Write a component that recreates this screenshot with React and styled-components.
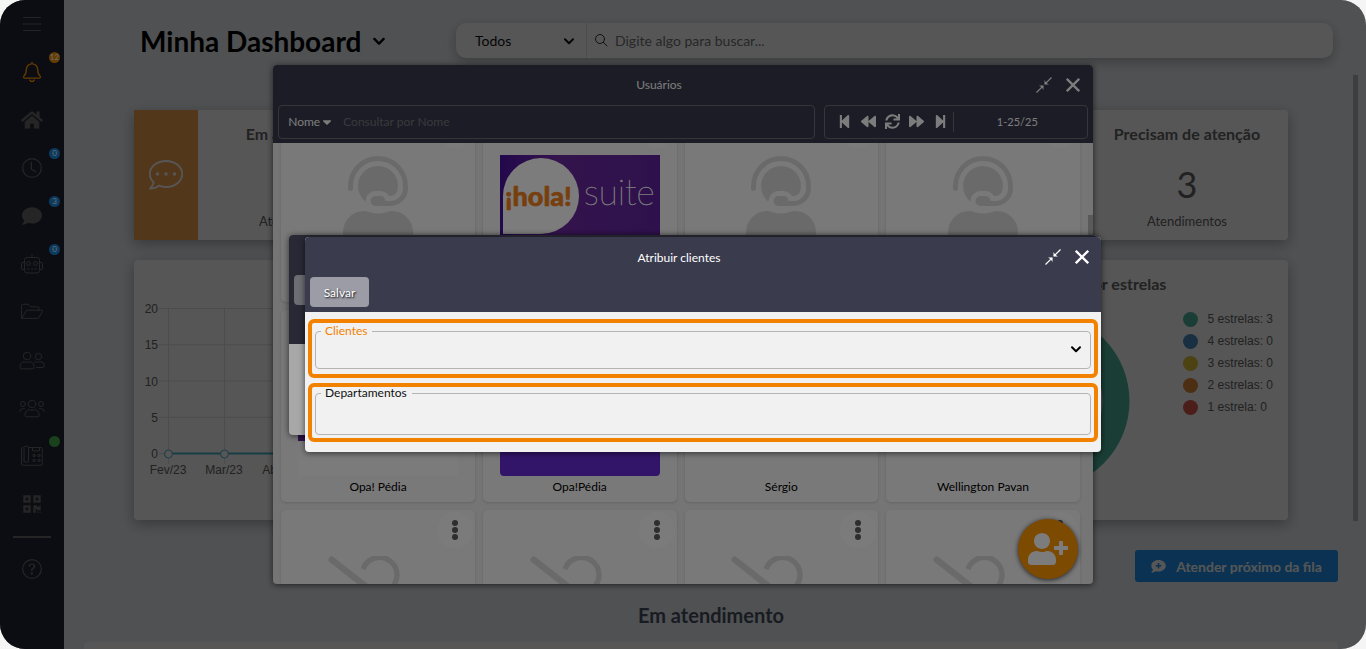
import React from 'react'
import styled, { createGlobalStyle, css } from 'styled-components'
import { FaHome, FaComment, FaQrcode, FaUserPlus, FaStepBackward, FaStepForward, FaBackward, FaForward, FaSync, FaCaretDown } from 'react-icons/fa'
import { BsClock, BsQuestionCircle } from 'react-icons/bs'

const vars = {
  FONT: 'Lato, "Open Sans", sans-serif',
  FONT_CHART: '"Liberation Sans", Arial, sans-serif',
  DARK: '#3a3b4d',
  LIGHT: '#f1f1f1',
  ORANGE: '#ff9800',
  BLUE: '#2196f3',
  SIDE_ICON: '#4c4c4c',
  SIDE_ORANGE: '#d07c00',
  SIDE_BLUE: '#1b7ac6',
  SIDE_GREEN: '#35863a',
  HIGHLIGHT: '#f28100'
}

const GlobalStyle = createGlobalStyle`
  *, *::before, *::after {
    box-sizing: border-box;
  }
  body {
    margin: 0;
    background: #f5f5f5;
    font-family: ${vars.FONT};
    font-size: 12px;
  }
  button, input, select {
    font-family: inherit;
    font-size: inherit;
    color: inherit;
    border: 0;
    margin: 0;
    padding: 0;
    background: none;
    outline: none;
  }
  select {
    appearance: none;
  }
  svg {
    display: block;
    flex: none;
  }
`

const Frame = styled.div`
  position: relative;
  display: flex;
  height: 100vh;
  overflow: hidden;
  border-radius: 25px;
  background: #ecf0f5;
`

/* sidebar */

const Sidebar = styled.nav`
  position: relative;
  z-index: 2;
  flex: none;
  display: flex;
  flex-direction: column;
  align-items: center;
  width: 64px;
  background: #1b1d27;
  color: ${vars.SIDE_ICON};
`

const SideItem = styled.button`
  position: relative;
  display: flex;
  align-items: center;
  justify-content: center;
  width: 64px;
  height: 48px;
  color: ${({ $color }) => $color || 'inherit'};
`

const Badge = styled.span`
  position: absolute;
  top: 4px;
  right: 4px;
  width: 11px;
  height: 11px;
  border-radius: 50%;
  background: ${({ $color }) => $color};
  color: #ddd;
  font-size: 8px;
  line-height: 11px;
  text-align: center;
`

const Divider = styled.hr`
  width: 38px;
  height: 2px;
  margin: 8px 0 7px;
  border: 0;
  background: ${vars.SIDE_ICON};
`

/* page */

const Main = styled.main`
  flex: 1;
  min-width: 0;
  display: flex;
  flex-direction: column;
`

const TopBar = styled.header`
  display: flex;
  align-items: center;
  height: 75px;
  padding: 6px 33px 0 76px;
`

const PageTitle = styled.h1`
  display: flex;
  align-items: center;
  gap: 11px;
  width: 316px;
  margin: 0;
  font-size: 28px;
  line-height: 36px;
  color: #000;
`

const SearchBar = styled.div`
  flex: 1;
  display: flex;
  height: 35px;
  border-radius: 10px;
  background: #fff;
  box-shadow: 0 4px 12px rgba(0, 0, 0, .25);
  font-size: 14px;
`

const Scope = styled.label`
  display: flex;
  align-items: center;
  width: 131px;
  padding: 0 11px 0 19px;
  border-right: 1px solid #e4e4e4;
  color: #111;
  select {
    flex: 1;
  }
`

const SearchBox = styled.label`
  flex: 1;
  display: flex;
  align-items: center;
  gap: 7px;
  padding: 0 7px;
  color: #333;
  input {
    flex: 1;
  }
  input::placeholder {
    color: #777;
  }
`

const Scroll = styled.div`
  position: relative;
  flex: 1;
  min-height: 0;
  overflow: hidden;
  margin-right: 8px;
  padding: 35px 20px 0;
`

const ScrollThumb = styled.div`
  position: absolute;
  top: 0;
  right: 0;
  width: 5px;
  height: ${({ $size }) => $size};
  background: #bbb;
`

const Cards = styled.section`
  display: grid;
  grid-template-columns: ${({ $columns }) => $columns};
  gap: 30px;
  padding: 0 50px 20px;
`

const Card = styled.article`
  grid-column: ${({ $column }) => $column || 'auto'};
  height: ${({ $tall }) => $tall ? '260px' : '130px'};
  display: flex;
  flex-direction: ${({ $tall }) => $tall ? 'column' : 'row'};
  border-radius: 4px;
  background: #fff;
  box-shadow: 0 4px 14px rgba(0, 0, 0, .3);
`

const CardIcon = styled.div`
  flex: none;
  display: flex;
  align-items: center;
  justify-content: center;
  width: 64px;
  background: #f8a252;
  color: #fff;
`

const CardBody = styled.div`
  flex: 1;
  display: flex;
  flex-direction: column;
  align-items: center;
  padding-top: 12px;
  color: #666;
`

const CardTitle = styled.h2`
  margin: 0;
  font-size: 16px;
  line-height: 24px;
  text-align: center;
  color: #666;
`

const CardValue = styled.div`
  margin: 16px 0 5px;
  font-size: 36px;
  line-height: 44px;
`

const CardCaption = styled.div`
  font-size: 13px;
  line-height: 20px;
`

const RatingChart = styled.div`
  display: flex;
  align-items: flex-start;
  align-self: stretch;
  justify-content: flex-end;
  gap: 53px;
  padding: 12px 15px 0 0;
`

const Legend = styled.ul`
  margin: 0;
  padding: 0;
  list-style: none;
  font: 12px/22px ${vars.FONT_CHART};
  color: #666;
`

const LegendItem = styled.li`
  display: flex;
  align-items: center;
  gap: 10px;
  &::before {
    content: '';
    width: 15px;
    height: 15px;
    border-radius: 50%;
    background: ${({ $color }) => $color};
  }
`

const ChartText = styled.g`
  font: 12px ${vars.FONT_CHART};
  fill: #666;
`

const Actions = styled.div`
  display: flex;
  justify-content: flex-end;
  margin-top: 10px;
`

const NextButton = styled.button`
  display: flex;
  align-items: center;
  justify-content: center;
  gap: 10px;
  width: 203px;
  height: 32px;
  border-radius: 3px;
  background: ${vars.BLUE};
  color: #fff;
  font-size: 14px;
  font-weight: 700;
`

const SectionTitle = styled.h2`
  margin: 19px 0 13px;
  font-size: 20px;
  line-height: 28px;
  text-align: center;
  color: #4a5464;
`

const Panel = styled.div`
  height: 60px;
  border-radius: 4px;
  background: #fff;
`

/* windows */

const Overlay = styled.div`
  position: absolute;
  inset: 0;
  z-index: ${({ $level }) => $level};
  display: flex;
  align-items: center;
  justify-content: center;
  padding: ${({ $shift }) => $shift || '0'} 0 0 ${({ $shift }) => $shift || '0'};
  background: rgba(0, 0, 0, .3);
`

const Window = styled.section`
  position: relative;
  display: flex;
  flex-direction: column;
  width: ${({ $width }) => $width};
  max-width: 100%;
  height: ${({ $height }) => $height || 'auto'};
  overflow: hidden;
  border-radius: 4px;
  background: ${vars.LIGHT};
  box-shadow: 0 1px 6px rgba(0, 0, 0, .6);
`

const WindowHeader = styled.header`
  flex: none;
  min-height: ${({ $min }) => $min || '0'};
  background: ${vars.DARK};
  color: #fff;
`

const TitleRow = styled.div`
  display: flex;
  align-items: center;
  height: 40px;
  padding: 0 5px 0 15px;
`

const WindowTitle = styled.h2`
  flex: 1;
  margin: 0;
  font-size: 12px;
  font-weight: 400;
  text-align: center;
`

const IconButton = styled.button`
  display: flex;
  align-items: center;
  justify-content: center;
  width: 29px;
  height: 30px;
`

const Toolbar = styled.div`
  display: flex;
  gap: 9px;
  padding: 0 5px ${({ $bottom }) => $bottom};
`

const SaveButton = styled.button`
  width: 59px;
  height: 30px;
  border-radius: 4px;
  background: #9c9ca6;
  color: #fff;
  text-shadow: 1px 1px 2px #000;
`

const barBox = css`
  display: flex;
  align-items: center;
  height: 34px;
  border: 1px solid #6f6f78;
  border-radius: 4px;
`

const FilterBar = styled.div`
  ${barBox}
  flex: 1;
  gap: 9px;
  padding-left: 9px;
  input {
    flex: 1;
  }
  input::placeholder {
    color: #77777f;
    opacity: 1;
  }
`

const FilterField = styled.button`
  display: flex;
  align-items: center;
`

const Pager = styled.div`
  ${barBox}
  width: 264px;
  padding-left: 8px;
`

const PagerButton = styled.button`
  display: flex;
  align-items: center;
  justify-content: center;
  width: 24px;
  height: 24px;
`

const PagerCount = styled.output`
  flex: 1;
  height: 20px;
  padding-right: 6px;
  border-left: 1px solid #6f6f78;
  font-size: 11px;
  line-height: 20px;
  text-align: center;
`

const UserList = styled.div`
  flex: 1;
  min-height: 0;
  overflow: hidden;
`

const UserGrid = styled.div`
  display: grid;
  grid-template-columns: repeat(4, 1fr);
  grid-auto-rows: 192px;
  gap: 8px;
  margin-top: -33px;
  padding: 0 13px 0 8px;
`

const UserCard = styled.article`
  position: relative;
  display: flex;
  flex-direction: column;
  align-items: center;
  padding-top: 6px;
  border-radius: 5px;
  background: #f9f9f9;
  box-shadow: 0 1px 3px rgba(0, 0, 0, .15);
`

const Picture = styled.div`
  display: flex;
  align-items: center;
  justify-content: center;
  width: 160px;
  height: 160px;
  overflow: hidden;
  border-radius: 4px;
  background: ${({ $color }) => $color || 'transparent'};
  color: #dcdcdc;
`

const UserName = styled.div`
  line-height: 22px;
  color: #000;
`

const MoreButton = styled.button`
  position: absolute;
  top: 2px;
  right: 2px;
  display: flex;
  align-items: center;
  justify-content: center;
  width: 36px;
  height: 36px;
  border-radius: 50%;
  background: #fdfdfd;
  color: #606060;
`

const ListThumb = styled.div`
  position: absolute;
  top: 150px;
  right: 0;
  width: 5px;
  height: 200px;
  background: #bbb;
`

const AddButton = styled.button`
  position: absolute;
  right: 15px;
  bottom: 5px;
  display: flex;
  align-items: center;
  justify-content: center;
  width: 60px;
  height: 60px;
  border-radius: 50%;
  background: ${vars.ORANGE};
  color: #fff;
  box-shadow: 0 1px 5px rgba(0, 0, 0, .7);
`

const Form = styled.form`
  display: flex;
  flex-direction: column;
  gap: 5px;
  padding: 7px 3px 10px;
`

const Highlight = styled.div`
  height: 59px;
  padding: ${({ $padding }) => $padding};
  border: 4px solid ${vars.HIGHLIGHT};
  border-radius: 6px;
`

const Field = styled.fieldset`
  height: 100%;
  min-width: 0;
  margin: 0;
  padding: 0 5px;
  border: 1px solid #b4b4b4;
  border-radius: 4px;
  legend {
    padding: 0 5px 0 4px;
    line-height: 12px;
    color: ${({ $active }) => $active ? vars.HIGHLIGHT : '#111'};
  }
`

const FieldRow = styled.div`
  display: flex;
  align-items: center;
  height: ${({ $height }) => $height};
  padding-right: 3px;
  input, select {
    flex: 1;
    height: 24px;
  }
`

/* icons */

const Chevron = ({ size = 12, ...props }) => (
  <svg width={size} height={size} viewBox="0 0 12 12" fill="none" stroke="currentColor" strokeWidth="2" strokeLinecap="round" strokeLinejoin="round" { ...props }>
    <path d="M2 4.200 6 8.200 10 4.200"/>
  </svg>
)

const LineIcon = ({ width = 24, height = 20, stroke = 1, children }) => (
  <svg width={width} height={height} viewBox={`0 0 ${width} ${height}`} fill="none" stroke="currentColor" strokeWidth={stroke} strokeLinecap="round" strokeLinejoin="round">
    {children}
  </svg>
)

const MenuIcon = () => (
  <LineIcon width={18} height={16}>
    <path d="M.5 1.500h17M.5 8h17M.5 14.500h17"/>
  </LineIcon>
)

const BellIcon = () => (
  <LineIcon width={20} height={22} stroke={1.3}>
    <path d="M10 1.500v1.300M10 2.800a5.700 5.700 0 0 0-5.700 5.700c0 3.800-.9 5.300-2.400 6.600-.8.800-.4 2 .7 2h14.800c1.100 0 1.500-1.200.7-2-1.500-1.300-2.400-2.800-2.400-6.600A5.700 5.700 0 0 0 10 2.800zM7.800 19a2.300 2 0 0 0 4.400 0"/>
  </LineIcon>
)

const SearchIcon = () => (
  <LineIcon width={14} height={16}>
    <circle cx="6" cy="6" r="4.500"/>
    <path d="M9.300 9.300 13 13"/>
  </LineIcon>
)

const RobotIcon = () => (
  <LineIcon width={24} height={22}>
    <path d="M12 1.500v3M6.500 4.500h11a2 2 0 0 1 2 2v11a2.500 2.500 0 0 1-2.500 2.500H7a2.500 2.500 0 0 1-2.500-2.500v-11a2 2 0 0 1 2-2zM4.500 9.500H3a1.500 1.500 0 0 0-1.500 1.500v4A1.500 1.500 0 0 0 3 16.500h1.500M19.500 9.500H21a1.500 1.500 0 0 1 1.500 1.500v4a1.500 1.500 0 0 1-1.500 1.500h-1.500"/>
    <circle cx="8.500" cy="10.500" r="2"/>
    <circle cx="15.500" cy="10.500" r="2"/>
    <path d="M7.500 16h1.500M11.300 16h1.500M15 16h1.500"/>
  </LineIcon>
)

const FolderIcon = () => (
  <LineIcon width={24} height={18}>
    <path d="M1.500 14.500v-12a1.200 1.200 0 0 1 1.200-1.200h5.500l2.500 2.500h7a1.200 1.200 0 0 1 1.200 1.200v2.500M1.800 15.300l4.200-7.300a1.500 1.500 0 0 1 1.300-.8h14.400c.7 0 1.100.6.800 1.200l-3.600 6.200a1.500 1.500 0 0 1-1.300.8H2.300c-.4 0-.8-.4-.5-.9z"/>
  </LineIcon>
)

const FriendsIcon = () => (
  <LineIcon width={26} height={19}>
    <circle cx="8" cy="5" r="3.700"/>
    <circle cx="19.500" cy="5.500" r="3.200"/>
    <path d="M1 15.500a4.500 4.500 0 0 1 4.300-4.700c.9 0 1.500.5 2.700.5s1.800-.5 2.700-.5a4.500 4.500 0 0 1 4.300 4.700v1a1.300 1.300 0 0 1-1.300 1.300H2.300A1.300 1.300 0 0 1 1 16.500zM15.500 11.300c.7-.3 1.300-.5 2-.5.800 0 1.200.3 2.100.3s1.300-.3 2.100-.3a3.600 3.600 0 0 1 3.500 3.700v.7a1.300 1.300 0 0 1-1.300 1.300h-6.400"/>
  </LineIcon>
)

const GroupIcon = () => (
  <LineIcon width={26} height={19}>
    <circle cx="13" cy="5" r="3.700"/>
    <circle cx="4" cy="5" r="2.500"/>
    <circle cx="22" cy="5" r="2.500"/>
    <path d="M6 15.500a4.500 4.500 0 0 1 4.300-4.700c.9 0 1.500.5 2.700.5s1.800-.5 2.700-.5a4.500 4.500 0 0 1 4.300 4.700v1a1.300 1.300 0 0 1-1.300 1.300H7.300A1.300 1.300 0 0 1 6 16.500zM1 12.500v-.3a2.500 2.500 0 0 1 2.400-2.500h2.100M25 12.500v-.3a2.500 2.500 0 0 0-2.400-2.500h-2.100"/>
  </LineIcon>
)

const PhoneIcon = () => (
  <LineIcon width={24} height={22}>
    <path d="M8.500 2.500H21a1.300 1.300 0 0 1 1.300 1.300V19a1.300 1.300 0 0 1-1.300 1.300H3.200A1.500 1.500 0 0 1 1.500 19V4A1.300 1.300 0 0 1 2.800 2.500M4 16V2.500A1.200 1.200 0 0 1 5.200 1.300h2A1.200 1.200 0 0 1 8.500 2.500V16a1.200 1.200 0 0 1-1.200 1.200H5.200A1.200 1.200 0 0 1 4 16zM12.500 2.500v3.300h7V2.500"/>
    <circle cx="14" cy="10.500" r="1.200"/>
    <circle cx="19" cy="10.500" r="1.200"/>
    <circle cx="14" cy="15.500" r="1.200"/>
    <circle cx="19" cy="15.500" r="1.200"/>
  </LineIcon>
)

const ChatIcon = () => (
  <svg width="36" height="32" viewBox="0 0 36 32" fill="none" stroke="currentColor" strokeWidth="1.800" strokeLinejoin="round">
    <path d="M18 2C9 2 1.800 7.800 1.800 15c0 3.200 1.500 6.200 3.900 8.400-.4 2.200-1.800 4.300-3.700 6.300 3.700 0 6.800-1.300 8.900-3.100 2.200.9 4.600 1.400 7.100 1.400 9 0 16.200-5.800 16.200-13S27 2 18 2z"/>
    <g fill="currentColor" stroke="none">
      <circle cx="9.500" cy="15" r="1.700"/>
      <circle cx="18" cy="15" r="1.700"/>
      <circle cx="26.500" cy="15" r="1.700"/>
    </g>
  </svg>
)

const ChatPlusIcon = () => (
  <svg width="15" height="13" viewBox="0 0 15 13">
    <path fill="currentColor" d="M7.500 0C3.400 0 .3 2.600.3 5.800c0 1.500.6 2.800 1.700 3.800C1.800 10.800 1.100 11.700 0 12.500c2 .1 3.500-.5 4.500-1.300 1 .3 2 .4 3 .4 4.100 0 7.300-2.600 7.300-5.800S11.600 0 7.500 0z"/>
    <path stroke={vars.BLUE} strokeWidth="1.600" d="M7.500 3v5.600M4.700 5.800h5.600"/>
  </svg>
)

const ShrinkIcon = () => (
  <svg width="16" height="16" viewBox="0 0 16 16" fill="none" stroke="currentColor" strokeWidth="1.200">
    <path d="M.5 15.500 7.200 8.800M8.800 7.200 15.500.5"/>
    <path fill="currentColor" stroke="none" d="M3 8.500h4.500V13L5.700 10.300zM13 7.500H8.500V3L10.300 5.700z"/>
  </svg>
)

const CloseIcon = () => (
  <svg width="14" height="14" viewBox="0 0 14 14" fill="none" stroke="currentColor" strokeWidth="2.300">
    <path d="M.8.8l12.400 12.400M13.200.8.8 13.200"/>
  </svg>
)

const DotsIcon = () => (
  <svg width="6" height="20" viewBox="0 0 6 20" fill="currentColor">
    <circle cx="3" cy="3" r="3"/>
    <circle cx="3" cy="10" r="3"/>
    <circle cx="3" cy="17" r="3"/>
  </svg>
)

const AgentIcon = () => (
  <svg width="70" height="80" viewBox="0 0 448 512" fill="currentColor">
    <circle cx="224" cy="192" r="128"/>
    <g fill="none" strokeLinecap="round">
      <path stroke="#f9f9f9" strokeWidth="96" d="M400 208a96 96 0 0 1-96 96h-64"/>
      <path stroke="#f9f9f9" strokeWidth="128" d="M208 288h32"/>
      <path stroke="currentColor" strokeWidth="32" d="M48 208v-16a176 176 0 0 1 352 0v16a96 96 0 0 1-96 96h-64"/>
    </g>
    <rect x="176" y="256" width="96" height="64" rx="32"/>
    <path d="M313.600 352c-28.700 0-42.500 16-89.600 16s-60.800-16-89.600-16A134.400 134.400 0 0 0 0 486.400V512h448v-25.600A134.400 134.400 0 0 0 313.600 352z"/>
  </svg>
)

const InactiveIcon = () => (
  <svg width="100" height="80" viewBox="0 0 640 512" fill="none" stroke="currentColor" strokeWidth="34">
    <path d="M224 84a112 112 0 1 1 168 130"/>
    <path strokeWidth="42" strokeLinecap="round" d="M24 24 616 488"/>
    <path d="M260 320a120 120 0 0 0-130 120v52h380"/>
  </svg>
)

const HolaLogo = () => (
  <svg width="160" height="82" viewBox="0 0 160 82">
    <defs>
      <linearGradient id="hola" x1="0" x2="1">
        <stop offset="0" stopColor="#47129c"/>
        <stop offset=".35" stopColor="#6c2a9e"/>
        <stop offset="1" stopColor="#60249e"/>
      </linearGradient>
    </defs>
    <rect width="160" height="82" fill="url(#hola)"/>
    <path fill="#fff" d="M3 79V41A38 38 0 1 1 41 79z"/>
    <text x="5" y="51" fontFamily={vars.FONT} fontSize="27" fontWeight="900" fill="#f5831f" stroke="#f5831f" strokeWidth=".6">¡hola!</text>
    <text x="84" y="50" fontFamily={vars.FONT} fontSize="35" fontWeight="100" fill="#fff" stroke="#fff" strokeWidth=".4">suite</text>
  </svg>
)

/* data */

const menu = [
  { label: 'Menu', icon: <MenuIcon/> },
  { label: 'Notificações', icon: <BellIcon/>, color: vars.SIDE_ORANGE, badge: '12', badgeColor: vars.SIDE_ORANGE },
  { label: 'Início', icon: <FaHome size={22}/> },
  { label: 'Espera', icon: <BsClock size={20}/>, badge: '0', badgeColor: vars.SIDE_BLUE },
  { label: 'Conversas', icon: <FaComment size={20}/>, badge: '3', badgeColor: vars.SIDE_BLUE },
  { label: 'Robôs', icon: <RobotIcon/>, badge: '0', badgeColor: vars.SIDE_BLUE },
  { label: 'Arquivos', icon: <FolderIcon/> },
  { label: 'Contatos', icon: <FriendsIcon/> },
  { label: 'Grupos', icon: <GroupIcon/> },
  { label: 'Telefonia', icon: <PhoneIcon/>, badge: '', badgeColor: vars.SIDE_GREEN },
  { label: 'QR Code', icon: <FaQrcode size={20}/> }
]

const ratings = [
  { label: '5 estrelas: 3', color: '#4fb8a0' },
  { label: '4 estrelas: 0', color: '#4a90c4' },
  { label: '3 estrelas: 0', color: '#e0c438' },
  { label: '2 estrelas: 0', color: '#e08838' },
  { label: '1 estrela: 0', color: '#e05a50' }
]

const pager = [
  { label: 'Primeira página', Icon: FaStepBackward },
  { label: 'Página anterior', Icon: FaBackward },
  { label: 'Atualizar', Icon: FaSync },
  { label: 'Próxima página', Icon: FaForward },
  { label: 'Última página', Icon: FaStepForward }
]

const users = [
  { picture: <AgentIcon/> },
  { picture: <HolaLogo/> },
  { picture: <AgentIcon/> },
  { picture: <AgentIcon/> },
  { name: 'Opa! Pédia', color: '#fdfdfd', picture: <svg width="160" height="90"><rect width="160" height="90" fill="#67299f"/></svg> },
  { name: 'Opa!Pédia', color: '#682bd8' },
  { name: 'Sérgio' },
  { name: 'Wellington Pavan' },
  { picture: <InactiveIcon/> },
  { picture: <InactiveIcon/> },
  { picture: <InactiveIcon/> },
  { picture: <InactiveIcon/> }
]

const months = ['Fev/23', 'Mar/23', 'Abr/23']

const LineChart = () => (
  <svg width="400" height="240" viewBox="0 0 400 240">
    <g stroke="#e0e0e0">
      {[20, 15, 10, 5, 0].map((n, i) => <path key={n} d={`M25 ${48.5 + i * 36.25}H400`}/>)}
      {months.map((m, i) => <path key={m} d={`M${34.5 + i * 56} 48V204`}/>)}
    </g>
    <path stroke="#4bb5d0" strokeWidth="2" d="M34 193.500H400"/>
    {months.map((m, i) => <circle key={m} cx={34.5 + i * 56} cy="194" r="4" fill="#fff" stroke="#4bb5d0"/>)}
    <ChartText>
      {[20, 15, 10, 5, 0].map((n, i) => <text key={n} x="24" y={53 + i * 36.25} textAnchor="end">{n}</text>)}
      {months.map((m, i) => <text key={m} x={34 + i * 56} y="214" textAnchor="middle">{m}</text>)}
    </ChartText>
  </svg>
)

const WindowTitleRow = ({ title }) => (
  <TitleRow>
    <WindowTitle>{title}</WindowTitle>
    <IconButton type="button" aria-label="Minimizar"><ShrinkIcon/></IconButton>
    <IconButton type="button" aria-label="Fechar"><CloseIcon/></IconButton>
  </TitleRow>
)

const UsersWindow = () => (
  <Window $width="60vw" $height="80vh">
    <WindowHeader>
      <WindowTitleRow title="Usuários"/>
      <Toolbar $bottom="4px">
        <FilterBar>
          <FilterField type="button">Nome <FaCaretDown size={14}/></FilterField>
          <input type="text" aria-label="Consultar por Nome" placeholder="Consultar por Nome"/>
        </FilterBar>
        <Pager>
          {pager.map(({ label, Icon }) => (
            <PagerButton key={label} type="button" aria-label={label}><Icon size={15}/></PagerButton>
          ))}
          <PagerCount>1-25/25</PagerCount>
        </Pager>
      </Toolbar>
    </WindowHeader>
    <UserList>
      <UserGrid>
        {users.map(({ name, color, picture }, i) => (
          <UserCard key={i}>
            <Picture $color={color}>{picture}</Picture>
            {name && <UserName>{name}</UserName>}
            <MoreButton type="button" aria-label="Opções"><DotsIcon/></MoreButton>
          </UserCard>
        ))}
      </UserGrid>
    </UserList>
    <ListThumb/>
    <AddButton type="button" aria-label="Adicionar usuário"><FaUserPlus size={40}/></AddButton>
  </Window>
)

const AssignWindow = () => (
  <Window $width="796px">
    <WindowHeader>
      <WindowTitleRow title="Atribuir clientes"/>
      <Toolbar $bottom="5px">
        <SaveButton type="button">Salvar</SaveButton>
      </Toolbar>
    </WindowHeader>
    <Form>
      <Highlight $padding="2px 3px 5px">
        <Field $active>
          <legend><label htmlFor="clientes">Clientes</label></legend>
          <FieldRow $height="24px">
            <select id="clientes"><option value=""></option></select>
            <Chevron/>
          </FieldRow>
        </Field>
      </Highlight>
      <Highlight $padding="0 3px 3px">
        <Field>
          <legend><label htmlFor="departamentos">Departamentos</label></legend>
          <FieldRow $height="28px">
            <input id="departamentos" type="text"/>
          </FieldRow>
        </Field>
      </Highlight>
    </Form>
  </Window>
)

export default () => (
  <Frame>
    <GlobalStyle/>
    <Sidebar>
      {menu.map(({ label, icon, color, badge, badgeColor }) => (
        <SideItem key={label} type="button" aria-label={label} $color={color}>
          {icon}
          {badgeColor && <Badge $color={badgeColor}>{badge}</Badge>}
        </SideItem>
      ))}
      <Divider/>
      <SideItem type="button" aria-label="Ajuda"><BsQuestionCircle size={20}/></SideItem>
    </Sidebar>
    <Main>
      <TopBar>
        <PageTitle>Minha Dashboard <Chevron size={14}/></PageTitle>
        <SearchBar>
          <Scope>
            <select aria-label="Filtro"><option>Todos</option></select>
            <Chevron/>
          </Scope>
          <SearchBox>
            <SearchIcon/>
            <input type="text" aria-label="Buscar" placeholder="Digite algo para buscar..."/>
          </SearchBox>
        </SearchBar>
      </TopBar>
      <Scroll>
        <Cards $columns="repeat(4, 1fr)">
          <Card $column="1">
            <CardIcon><ChatIcon/></CardIcon>
            <CardBody>
              <CardTitle>Em andamento</CardTitle>
              <CardValue>0</CardValue>
              <CardCaption>Atendimentos</CardCaption>
            </CardBody>
          </Card>
          <Card $column="4">
            <CardIcon><ChatIcon/></CardIcon>
            <CardBody>
              <CardTitle>Precisam de atenção</CardTitle>
              <CardValue>3</CardValue>
              <CardCaption>Atendimentos</CardCaption>
            </CardBody>
          </Card>
        </Cards>
        <Cards $columns="2fr 1fr">
          <Card $tall>
            <LineChart/>
          </Card>
          <Card $tall>
            <CardBody>
              <CardTitle>Média por estrelas</CardTitle>
              <RatingChart>
                <svg width="178" height="186" viewBox="0 0 178 186">
                  <circle cx="89" cy="93" r="75" fill="none" stroke={ratings[0].color} strokeWidth="27"/>
                </svg>
                <Legend>
                  {ratings.map(({ label, color }) => <LegendItem key={label} $color={color}>{label}</LegendItem>)}
                </Legend>
              </RatingChart>
            </CardBody>
          </Card>
        </Cards>
        <Actions>
          <NextButton type="button"><ChatPlusIcon/>Atender próximo da fila</NextButton>
        </Actions>
        <SectionTitle>Em atendimento</SectionTitle>
        <Panel/>
        <ScrollThumb $size="446px"/>
      </Scroll>
    </Main>
    <Overlay $level="1">
      <UsersWindow/>
    </Overlay>
    <Overlay $level="3" $shift="20px">
      <Window $width="808px" $height="200px">
        <WindowHeader $min="109px">
          <WindowTitleRow/>
          <Toolbar $bottom="0">
            <SaveButton type="button" aria-label="Salvar"/>
          </Toolbar>
        </WindowHeader>
      </Window>
    </Overlay>
    <Overlay $level="4" $shift="40px">
      <AssignWindow/>
    </Overlay>
  </Frame>
)
